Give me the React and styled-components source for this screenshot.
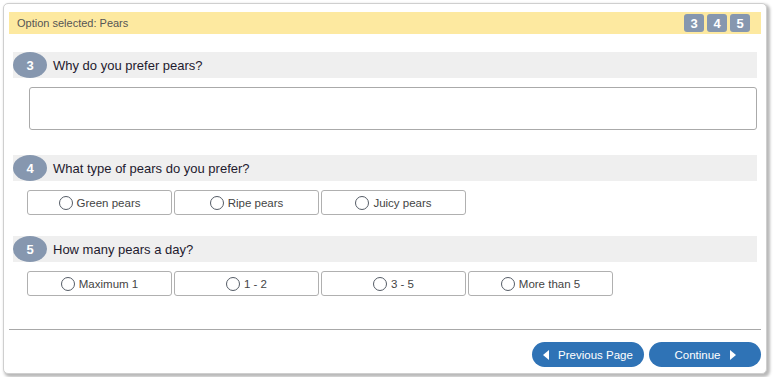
import styled, { createGlobalStyle } from "styled-components";

const GlobalStyle = createGlobalStyle`
  html, body {
    margin: 0;
    padding: 0;
    background: #ffffff;
  }
  body {
    font-family: "Liberation Sans", Arial, sans-serif;
  }
`;

const questions = [
  {
    num: 3,
    title: "Why do you prefer pears?",
    type: "text",
  },
  {
    num: 4,
    title: "What type of pears do you prefer?",
    options: ["Green pears", "Ripe pears", "Juicy pears"],
  },
  {
    num: 5,
    title: "How many pears a day?",
    options: ["Maximum 1", "1 - 2", "3 - 5", "More than 5"],
  },
];

const App = () => {
  return (
    <>
      <GlobalStyle />
      <Card>
        <InfoBar>
          <InfoText>Option selected: Pears</InfoText>
          <Badges>
            {questions.map((q) => (
              <Badge key={q.num}>{q.num}</Badge>
            ))}
          </Badges>
        </InfoBar>
        <Questions>
          {questions.map((q) => (
            <Question key={q.num}>
              <QuestionHeader>
                <QuestionNum>{q.num}</QuestionNum>
                <QuestionTitle>{q.title}</QuestionTitle>
              </QuestionHeader>
              {q.type === "text" ? (
                <TextArea />
              ) : (
                <Options>
                  {q.options.map((opt) => (
                    <Option key={opt}>
                      <Radio />
                      {opt}
                    </Option>
                  ))}
                </Options>
              )}
            </Question>
          ))}
        </Questions>
        <Divider />
        <Footer>
          <NavButton>
            <Arrow $dir="left" />
            Previous Page
          </NavButton>
          <NavButton>
            Continue
            <Arrow $dir="right" />
          </NavButton>
        </Footer>
      </Card>
    </>
  );
};

const Card = styled.div`
  box-sizing: border-box;
  width: 764px;
  height: 371px;
  margin: 3px;
  padding: 8px 5px 0;
  border: 1px solid #cfcfcf;
  border-radius: 5px;
  background: #fff;
  box-shadow: 2px 2px 3px 1px rgba(0, 0, 0, 0.28);
  display: flex;
  flex-direction: column;
`;

const InfoBar = styled.div`
  display: flex;
  align-items: center;
  justify-content: space-between;
  height: 22px;
  padding: 0 11px 0 8px;
  background: #fde9a0;
`;

const InfoText = styled.span`
  font-size: 11px;
  color: #555;
`;

const Badges = styled.div`
  display: flex;
  gap: 3px;
`;

const Badge = styled.span`
  display: flex;
  align-items: center;
  justify-content: center;
  width: 20px;
  height: 18px;
  border-radius: 3px;
  background: #8697af;
  color: #fff;
  font-size: 13px;
  font-weight: bold;
`;

const Questions = styled.div`
  display: flex;
  flex-direction: column;
  padding: 0 4px;
`;

const Question = styled.div`
  display: flex;
  flex-direction: column;
  margin-top: 18px;
  & + & {
    margin-top: 25px;
  }
  &:last-child {
    margin-top: 21px;
  }
`;

const QuestionHeader = styled.div`
  display: flex;
  align-items: center;
  height: 26px;
  background: #efefef;
`;

const QuestionNum = styled.span`
  display: flex;
  align-items: center;
  justify-content: center;
  width: 34px;
  height: 26px;
  border-radius: 50%;
  background: #8697af;
  color: #fff;
  font-size: 13px;
  font-weight: bold;
`;

const QuestionTitle = styled.span`
  margin-left: 6px;
  font-size: 13px;
  color: #1e1a2e;
`;

const TextArea = styled.div`
  box-sizing: border-box;
  height: 43px;
  margin: 9px 0 0 16px;
  border: 1px solid #aaa;
  border-radius: 3px;
`;

const Options = styled.div`
  display: flex;
  gap: 2px;
  margin: 9px 0 0 14px;
`;

const Option = styled.div`
  box-sizing: border-box;
  display: flex;
  align-items: center;
  justify-content: center;
  gap: 4px;
  width: 145px;
  height: 25px;
  border: 1px solid #b0b0b0;
  border-radius: 3px;
  font-size: 11.5px;
  color: #444;
`;

const Radio = styled.span`
  box-sizing: border-box;
  width: 14px;
  height: 14px;
  border: 1.3px solid #555c66;
  border-radius: 50%;
  background: #fff;
`;

const Divider = styled.div`
  height: 1px;
  margin-top: 33px;
  background: #a8a8a8;
`;

const Footer = styled.div`
  display: flex;
  justify-content: flex-end;
  gap: 5px;
  margin-top: 12px;
  padding-right: 0;
`;

const NavButton = styled.button`
  display: flex;
  align-items: center;
  justify-content: center;
  gap: 9px;
  width: 112px;
  height: 25px;
  padding: 0;
  border: none;
  border-radius: 13px;
  background: #2f73b6;
  color: #fff;
  font-family: inherit;
  font-size: 11.5px;
`;

const Arrow = styled.span`
  width: 0;
  height: 0;
  border-top: 5px solid transparent;
  border-bottom: 5px solid transparent;
  ${({ $dir }) =>
    $dir === "left"
      ? "border-right: 6px solid #fff;"
      : "border-left: 6px solid #fff;"}
`;

export default App;
